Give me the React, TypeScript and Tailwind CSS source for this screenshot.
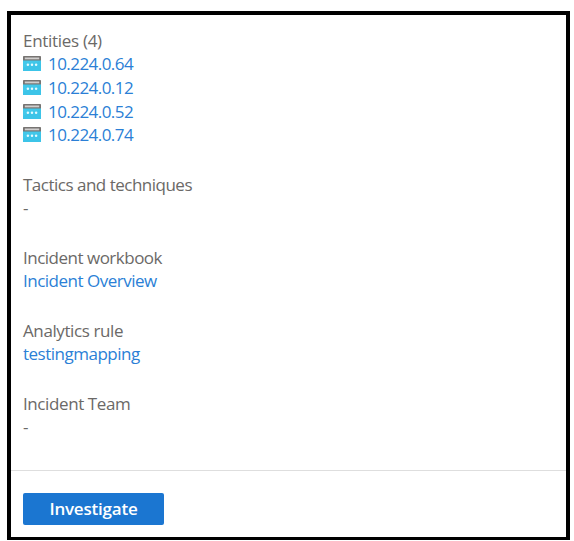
import React from "react";

function HostIcon() {
  return (
    <svg width="18" height="15" viewBox="0 0 18 15" className="shrink-0">
      <rect x="0" y="3" width="18" height="12" fill="#42c8ea" />
      <path d="M0 15V12L18 5V15Z" fill="#35bfe6" opacity=".5" />
      <rect x="0" y="0" width="18" height="4.6" rx=".7" fill="#777472" />
      <rect x="1.8" y="1.5" width="14.4" height="1.8" fill="#d0cecd" />
      <circle cx="4.9" cy="8.8" r="1.25" fill="#e3faff" />
      <circle cx="9" cy="8.8" r="1.25" fill="#e3faff" />
      <circle cx="13.1" cy="8.8" r="1.25" fill="#e3faff" />
    </svg>
  );
}

const hosts = ["10.224.0.64", "10.224.0.12", "10.224.0.52", "10.224.0.74"];

type SectionProps = {
  label: string;
  value?: string;
  link?: boolean;
  labelTracking: string;
  valueTracking?: string;
};

function Section({ label, value, link, labelTracking, valueTracking = "" }: SectionProps) {
  return (
    <section className="h-[73px] shrink-0 whitespace-nowrap">
      <div className={`h-[23px] leading-[23px] ${labelTracking}`}>{label}</div>
      {link ? (
        <a className={`block h-[23px] leading-[23px] text-[#2b7fd6] ${valueTracking}`}>{value}</a>
      ) : (
        <div className="h-[23px] leading-[23px]">{value}</div>
      )}
    </section>
  );
}

export default function App() {
  return (
    <div className="h-[541px] w-[574px] bg-white pl-[7px] pt-[11px] font-['Open_Sans','Noto_Sans',sans-serif]">
      <main className="flex h-[529px] w-[563px] flex-col border-x-[4px] border-b-[3px] border-t-[4px] border-black bg-white">
        <div className="flex h-[455px] shrink-0 flex-col overflow-hidden pl-[12px] pt-[14px] text-[17px] text-[#6b6967]">
          <section className="h-[144px] shrink-0">
            <h2 className="h-[23px] leading-[23px] tracking-[-0.3px]">Entities (4)</h2>
            <ul>
              {hosts.map((host) => (
                <li key={host} className="flex h-[23.7px] items-center gap-[7px]">
                  <HostIcon />
                  <a className="leading-[23px] tracking-[-0.55px] text-[#2b7fd6]">{host}</a>
                </li>
              ))}
            </ul>
          </section>
          <Section label="Tactics and techniques" value="-" labelTracking="tracking-[-0.5px]" />
          <Section label="Incident workbook" value="Incident Overview" link labelTracking="tracking-[-0.5px]" valueTracking="tracking-[-0.5px]" />
          <Section label="Analytics rule" value="testingmapping" link labelTracking="tracking-[-0.4px]" valueTracking="tracking-[-0.5px]" />
          <Section label="Incident Team" value="-" labelTracking="tracking-[-0.4px]" />
          <Section label="Tags" labelTracking="tracking-[-0.4px]" />
        </div>
        <footer className="flex-1 border-t border-[#dedede] pl-[12px] pt-[22px]">
          <button className="block h-[32px] w-[141px] rounded-[2px] bg-[#1b76d1] text-[17px] font-semibold leading-[32px] tracking-[-0.2px] text-white">
            Investigate
          </button>
        </footer>
      </main>
    </div>
  );
}
